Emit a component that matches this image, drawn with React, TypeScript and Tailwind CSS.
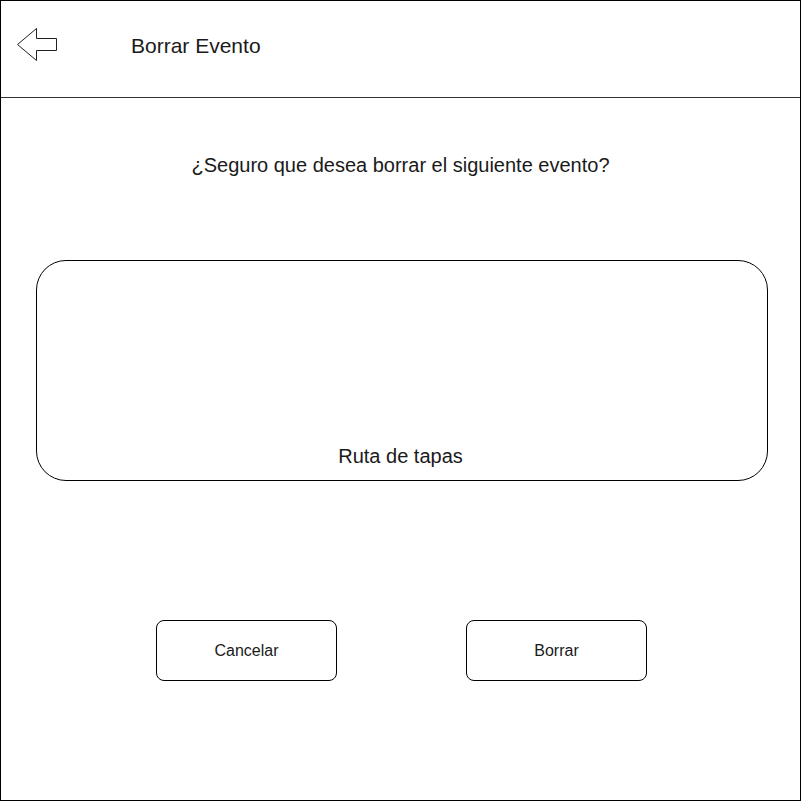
import React from "react";

export default function App() {
  return (
    <div className="w-[805px] h-[801px] bg-white" style={{ fontFamily: '"Liberation Sans", Arial, sans-serif' }}>
      <div className="w-[801px] h-[801px] border border-black flex flex-col text-[#1a1a1a]">
        <div className="h-[97px] shrink-0 border-b border-[#333] flex items-center">
          <svg width="44" height="36" viewBox="0 0 44 36" className="ml-[14px] mt-[-8px]">
            <path d="M2.5 17.5 L21.5 1.5 L21.5 11.5 L41.5 11.5 L41.5 23.5 L21.5 23.5 L21.5 33.5 Z" fill="white" stroke="#222" strokeWidth="1" strokeLinejoin="miter" />
          </svg>
          <span className="ml-[72px] mt-[-6px] text-[21px]">Borrar Evento</span>
        </div>
        <div className="mt-[52px] text-center text-[20px]">¿Seguro que desea borrar el siguiente evento?</div>
        <div className="mt-[80px] ml-[35px] mr-[32px] h-[221px] rounded-[30px] border border-black flex flex-col items-center justify-end pb-[9px] pr-[3px]">
          <span className="text-[20px]">Ruta de tapas</span>
        </div>
        <div className="mt-[139px] flex pl-[155px] gap-[129px]">
          <button className="w-[181px] h-[61px] rounded-[8px] border border-black text-[16px]">Cancelar</button>
          <button className="w-[181px] h-[61px] rounded-[8px] border border-black text-[16px]">Borrar</button>
        </div>
      </div>
    </div>
  );
}
